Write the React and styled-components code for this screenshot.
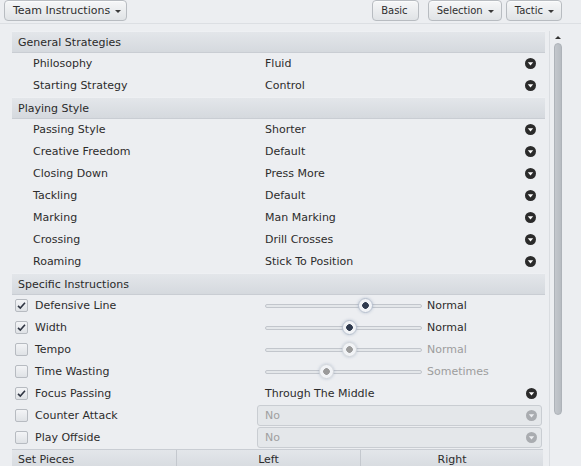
import React from 'react'
import styled, { createGlobalStyle } from 'styled-components'

const Global = createGlobalStyle`
  html, body {
    margin: 0;
    padding: 0;
    background: #eceef1;
  }
  body {
    font-family: "DejaVu Sans", "Liberation Sans", sans-serif;
    font-size: 11px;
    color: #2c2c2c;
  }
`

const Screen = styled.div`
  width: 581px;
  height: 466px;
  overflow: hidden;
  background: #eceef1;
`

const Toolbar = styled.div`
  height: 23px;
  display: flex;
  align-items: flex-start;
  padding: 0 19px 0 4px;
  border-bottom: 1px solid #dcdfe3;
  box-sizing: content-box;
  .spacer {
    flex: 1;
  }
`

const Button = styled.div`
  height: 19px;
  padding: 0 ${(p) => (p.$caret ? (p.$small ? '7px' : '5px') : '10px')} 0 ${(p) => (p.$small ? '8px' : '8px')};
  margin-left: ${(p) => p.$gap || 0}px;
  display: flex;
  align-items: center;
  gap: 5px;
  border: 1px solid #b8bcc1;
  border-radius: 4px;
  background: linear-gradient(#f6f7f8, #e0e3e6);
  color: #2e2e2e;
  font-size: ${(p) => (p.$small ? '10px' : '11px')};
  box-shadow: inset 0 1px 0 #fbfcfc;
`

const Caret = styled.span`
  width: 0;
  height: 0;
  border-left: 3px solid transparent;
  border-right: 3px solid transparent;
  border-top: 3px solid #3a3a3a;
  margin-top: 1px;
`

const Body = styled.div`
  display: flex;
  padding-top: 7px;
`

const Panel = styled.div`
  margin-left: 12px;
  width: 533px;
`

const Header = styled.div`
  height: 22px;
  box-sizing: border-box;
  display: flex;
  align-items: center;
  padding-left: 6px;
  background: linear-gradient(#e3e6ea, #d5d9de);
  border-top: 1px solid #eef0f3;
  border-bottom: 1px solid #c9cdd3;
  color: #2a2a2a;
`

const SetPieces = styled.div`
  height: 22px;
  box-sizing: border-box;
  display: grid;
  grid-template-columns: 164px 184px 1fr;
  margin-right: 2px;
  background: linear-gradient(#e3e6ea, #d5d9de);
  border-top: 1px solid #c9cdd3;
  > div {
    display: flex;
    align-items: center;
    padding-left: 6px;
    padding-bottom: 2px;
  }
  > div + div {
    justify-content: center;
    padding-left: 0;
    border-left: 1px solid #c4c8ce;
  }
`

const Row = styled.div`
  height: 22px;
  box-sizing: border-box;
  display: grid;
  grid-template-columns: 232px 1fr 14px;
  align-items: center;
  padding: 0 6px 1px 21px;
  background: #eceef1;
`

const CheckRow = styled.div`
  height: 22px;
  box-sizing: border-box;
  display: grid;
  grid-template-columns: 242px 1fr;
  align-items: center;
  padding: 0 3px 1px 3px;
  background: #eceef1;
`

const CheckLabel = styled.div`
  display: flex;
  align-items: center;
  gap: 7px;
`

const Box = styled.span`
  width: 13px;
  height: 13px;
  box-sizing: border-box;
  border: 1px solid #b7bbc1;
  border-radius: 2px;
  background: linear-gradient(#f3f4f6, #dfe2e6);
  display: flex;
  align-items: center;
  justify-content: center;
`

const SliderCell = styled.div`
  display: flex;
  align-items: center;
  padding-left: 8px;
`

const Track = styled.div`
  position: relative;
  width: 157px;
  height: 4px;
  box-sizing: border-box;
  border: 1px solid #c2c6cc;
  border-radius: 3px;
  background: #e4e7ea;
`

const Thumb = styled.span`
  position: absolute;
  top: 50%;
  width: 15px;
  height: 15px;
  box-sizing: border-box;
  margin: -7.5px 0 0 -7.5px;
  border-radius: 50%;
  border: 1px solid ${(p) => (p.$off ? '#d2d6db' : '#b6bfcd')};
  background: radial-gradient(circle, ${(p) => (p.$off ? '#9a9a9a' : '#2f3a4e')} 0 3px, #f1f3f6 3.6px);
  box-shadow: 0 0 3px rgba(120, 140, 170, 0.45);
`

const SliderValue = styled.span`
  margin-left: 5px;
  color: ${(p) => (p.$off ? '#9d9d9d' : '#2c2c2c')};
`

const ValueCell = styled.div`
  display: flex;
  align-items: center;
  justify-content: space-between;
  padding: 0 5px 0 8px;
`

const Select = styled.div`
  height: 21px;
  box-sizing: border-box;
  display: flex;
  align-items: center;
  justify-content: space-between;
  padding: 0 4px 0 7px;
  border: 1px solid #c9cdd2;
  border-radius: 3px;
  background: #e4e7ea;
  color: #a0a0a0;
`

const Scroll = styled.div`
  margin-left: 4px;
  width: 15px;
  height: 440px;
  border-left: 1px solid #dadde1;
  display: flex;
  flex-direction: column;
  align-items: center;
  .up {
    margin-top: 5px;
    width: 0;
    height: 0;
    border-left: 3px solid transparent;
    border-right: 3px solid transparent;
    border-bottom: 3px solid #333;
  }
`

const ScrollThumb = styled.div`
  margin-top: 4px;
  width: 8px;
  height: 372px;
  box-sizing: border-box;
  border-radius: 4px;
  border: 1px solid #aeb3b9;
  background: linear-gradient(90deg, #c3c7cc, #b7bcc2);
`

const Drop = ({ off }) => (
  <svg width="11" height="11" viewBox="0 0 11 11">
    <circle cx="5.5" cy="5.5" r="5.5" fill={off ? '#a9acb0' : '#2b2b2b'} />
    <path d="M2.8 4.2 H8.2 L5.5 7.6 Z" fill={off ? '#eceef1' : '#fff'} />
  </svg>
)

const Tick = () => (
  <svg width="11" height="11" viewBox="0 0 11 11">
    <path d="M2 5.8 L4.3 8 L9 2.8" fill="none" stroke="#2f3542" strokeWidth="1.6" />
  </svg>
)

const general = [
  ['Philosophy', 'Fluid'],
  ['Starting Strategy', 'Control'],
]

const playing = [
  ['Passing Style', 'Shorter'],
  ['Creative Freedom', 'Default'],
  ['Closing Down', 'Press More'],
  ['Tackling', 'Default'],
  ['Marking', 'Man Marking'],
  ['Crossing', 'Drill Crosses'],
  ['Roaming', 'Stick To Position'],
]

const sliders = [
  { label: 'Defensive Line', on: true, pos: 0.643, value: 'Normal' },
  { label: 'Width', on: true, pos: 0.541, value: 'Normal' },
  { label: 'Tempo', on: false, pos: 0.541, value: 'Normal' },
  { label: 'Time Wasting', on: false, pos: 0.389, value: 'Sometimes' },
]

const Setting = ({ label, value }) => (
  <Row>
    <span>{label}</span>
    <span>{value}</span>
    <Drop />
  </Row>
)

const App = () => {
  return (
    <Screen>
      <Global />
      <Toolbar>
        <Button $caret>
          Team Instructions <Caret />
        </Button>
        <div className="spacer" />
        <Button $small>Basic</Button>
        <Button $small $caret $gap={9}>
          Selection <Caret />
        </Button>
        <Button $small $caret $gap={4}>
          Tactic <Caret />
        </Button>
      </Toolbar>
      <Body>
        <Panel>
          <Header>General Strategies</Header>
          {general.map(([l, v]) => (
            <Setting key={l} label={l} value={v} />
          ))}
          <Header>Playing Style</Header>
          {playing.map(([l, v]) => (
            <Setting key={l} label={l} value={v} />
          ))}
          <Header>Specific Instructions</Header>
          {sliders.map((s) => (
            <CheckRow key={s.label}>
              <CheckLabel>
                <Box>{s.on && <Tick />}</Box>
                {s.label}
              </CheckLabel>
              <SliderCell>
                <Track>
                  <Thumb $off={!s.on} style={{ left: `${s.pos * 100}%` }} />
                </Track>
                <SliderValue $off={!s.on}>{s.value}</SliderValue>
              </SliderCell>
            </CheckRow>
          ))}
          <CheckRow>
            <CheckLabel>
              <Box>
                <Tick />
              </Box>
              Focus Passing
            </CheckLabel>
            <ValueCell>
              <span>Through The Middle</span>
              <Drop />
            </ValueCell>
          </CheckRow>
          <CheckRow>
            <CheckLabel>
              <Box />
              Counter Attack
            </CheckLabel>
            <Select>
              <span>No</span>
              <Drop off />
            </Select>
          </CheckRow>
          <CheckRow>
            <CheckLabel>
              <Box />
              Play Offside
            </CheckLabel>
            <Select>
              <span>No</span>
              <Drop off />
            </Select>
          </CheckRow>
          <SetPieces>
            <div>Set Pieces</div>
            <div>Left</div>
            <div>Right</div>
          </SetPieces>
        </Panel>
        <Scroll>
          <span className="up" />
          <ScrollThumb />
        </Scroll>
      </Body>
    </Screen>
  )
}

export default App
